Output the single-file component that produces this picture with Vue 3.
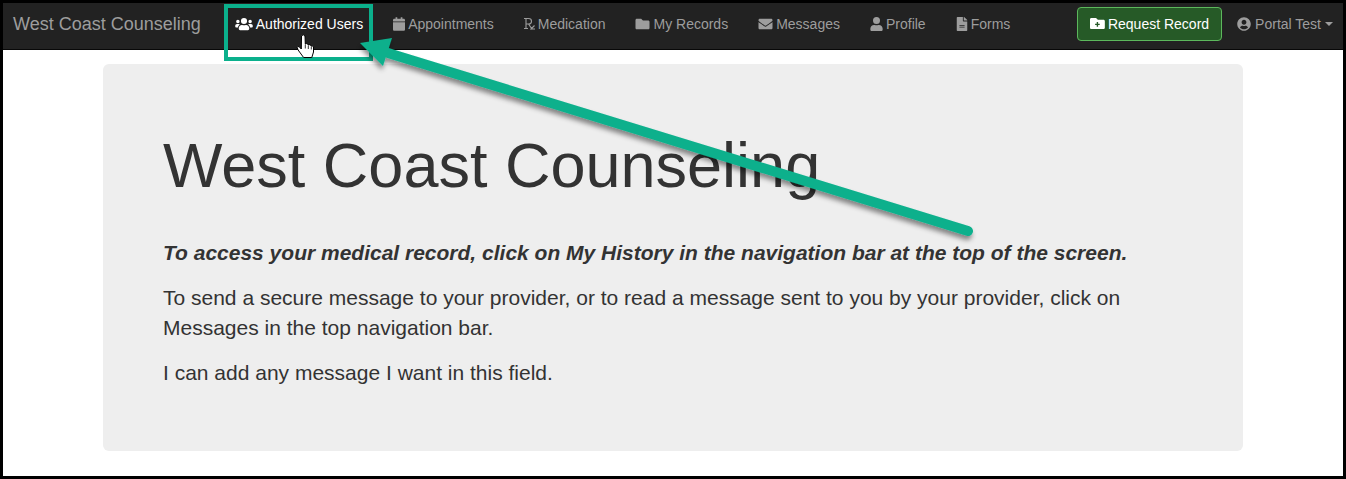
<script setup>
const links = [
  { label: 'Authorized Users', icon: 'users', w: 18, active: true },
  { label: 'Appointments', icon: 'calendar', w: 12 },
  { label: 'Medication', icon: 'rx', w: 11 },
  { label: 'My Records', icon: 'folder', w: 15 },
  { label: 'Messages', icon: 'envelope', w: 15 },
  { label: 'Profile', icon: 'user', w: 13 },
  { label: 'Forms', icon: 'file', w: 12 },
];

const paths = {
  users: 'M96 224a64 64 0 1 0 0-128 64 64 0 0 0 0 128zm448 0a64 64 0 1 0 0-128 64 64 0 0 0 0 128zm32 32h-64c-17.600 0-33.500 7.100-45.100 18.600 40.300 22.100 68.900 62 75.100 109.400h66c17.700 0 32-14.300 32-32v-32c0-35.300-28.700-64-64-64zm-256 0a112 112 0 1 0 0-224 112 112 0 0 0 0 224zm76.800 32h-8.300c-20.800 10-43.900 16-68.500 16s-47.600-6-68.500-16h-8.300C179.600 288 128 339.600 128 403.200V432c0 26.500 21.500 48 48 48h288c26.500 0 48-21.500 48-48v-28.800c0-63.600-51.600-115.200-115.200-115.200zm-223.700-13.400C161.500 263.100 145.600 256 128 256H64c-35.300 0-64 28.700-64 64v32c0 17.700 14.300 32 32 32h65.900c6.300-47.400 34.900-87.300 75.200-109.400z',
  calendar: 'M12 192h424c6.600 0 12 5.400 12 12v260c0 26.500-21.500 48-48 48H48c-26.500 0-48-21.500-48-48V204c0-6.600 5.400-12 12-12zm436-44v-36c0-26.500-21.500-48-48-48h-48V12c0-6.600-5.400-12-12-12h-40c-6.600 0-12 5.400-12 12v52H160V12c0-6.600-5.400-12-12-12h-40c-6.600 0-12 5.400-12 12v52H48C21.500 64 0 85.500 0 112v36c0 6.600 5.400 12 12 12h424c6.600 0 12-5.400 12-12z',
  folder: 'M464 128H272l-64-64H48C21.490 64 0 85.490 0 112v288c0 26.510 21.490 48 48 48h416c26.510 0 48-21.490 48-48V176c0-26.510-21.490-48-48-48z',
  envelope: 'M502.300 190.800c3.900-3.100 9.700-.2 9.700 4.700V400c0 26.500-21.500 48-48 48H48c-26.500 0-48-21.500-48-48V195.600c0-5 5.700-7.800 9.700-4.700 22.400 17.400 52.100 39.500 154.100 113.600 21.100 15.400 56.700 47.800 92.200 47.600 35.700.3 72-32.800 92.300-47.600 102-74.100 131.600-96.300 154-113.700zM256 320c23.200.4 56.600-29.200 73.400-41.400 132.700-96.300 142.800-104.700 173.400-128.700 5.800-4.500 9.200-11.500 9.200-18.900v-19c0-26.500-21.500-48-48-48H48C21.500 64 0 85.500 0 112v19c0 7.400 3.400 14.300 9.200 18.900 30.600 23.900 40.700 32.400 173.400 128.700 16.800 12.200 50.200 41.800 73.400 41.400z',
  user: 'M224 256a128 128 0 1 0 0-256 128 128 0 0 0 0 256zm89.600 32h-16.700c-22.200 10.200-46.900 16-72.900 16s-50.600-5.800-72.900-16h-16.700C60.200 288 0 348.200 0 422.400V464c0 26.500 21.500 48 48 48h352c26.500 0 48-21.500 48-48v-41.600c0-74.200-60.200-134.400-134.400-134.400z',
  file: 'M224 136V0H24C10.700 0 0 10.700 0 24v464c0 13.300 10.700 24 24 24h336c13.300 0 24-10.700 24-24V160H248c-13.200 0-24-10.800-24-24zm64 236c0 6.600-5.400 12-12 12H108c-6.600 0-12-5.400-12-12v-8c0-6.600 5.400-12 12-12h168c6.600 0 12 5.400 12 12v8zm0-64c0 6.600-5.400 12-12 12H108c-6.600 0-12-5.400-12-12v-8c0-6.600 5.400-12 12-12h168c6.600 0 12 5.400 12 12v8zm96-186v6H256V0h6c6.400 0 12.500 2.500 17 7l97.900 98c4.500 4.500 7.100 10.600 7.100 17z',
};
const viewBoxes = { users: '0 0 640 512', calendar: '0 0 448 512', folder: '0 0 512 512', envelope: '0 0 512 512', user: '0 0 448 512', file: '0 0 384 512' };
</script>

<template>
  <div class="frame">
    <nav class="navbar">
      <a class="brand">West Coast Counseling</a>
      <ul class="nav-links">
        <li v-for="link in links" :key="link.label" class="nav-link" :class="{ active: link.active }">
          <svg v-if="link.icon === 'rx'" class="icon" :style="{ width: link.w + 'px' }" viewBox="0 0 11 14" fill="none" stroke="currentColor" stroke-width="1.100">
            <path d="M0 1.500h4.500c2 0 3 1 3 2.700s-1.200 2.800-3 2.800H2M2 1.500V11.500M0 11.500h4M4.500 7l3.500 5h3M6.500 12.500l4-4" />
          </svg>
          <svg v-else class="icon" :style="{ width: link.w + 'px' }" :viewBox="viewBoxes[link.icon]" fill="currentColor">
            <path :d="paths[link.icon]" />
          </svg>
          {{ link.label }}
        </li>
      </ul>
      <div class="nav-right">
        <button class="btn-request">
          <svg class="folder-plus" viewBox="0 0 512 512">
            <path fill="#fff" d="M464 128H272l-64-64H48C21.490 64 0 85.490 0 112v288c0 26.510 21.490 48 48 48h416c26.510 0 48-21.490 48-48V176c0-26.510-21.490-48-48-48z" />
            <path fill="#265a27" d="M232 208h48v56h56v48h-56v56h-48v-56h-56v-48h56z" />
          </svg>
          Request Record
        </button>
        <a class="user-menu">
          <svg class="icon user-circle" viewBox="0 0 496 512" fill="currentColor">
            <path d="M248 8C111 8 0 119 0 256s111 248 248 248 248-111 248-248S385 8 248 8zm0 96c48.600 0 88 39.400 88 88s-39.400 88-88 88-88-39.400-88-88 39.400-88 88-88zm0 344c-58.700 0-111.300-26.600-146.500-68.200 18.800-35.400 55.600-59.800 98.500-59.800 2.400 0 4.800.4 7.100 1.100 13 4.200 26.600 6.900 40.900 6.900 14.300 0 28-2.700 40.900-6.900 2.300-.7 4.700-1.100 7.100-1.100 42.900 0 79.700 24.400 98.500 59.800C359.300 421.400 306.700 448 248 448z" />
          </svg>
          Portal Test
          <span class="caret"></span>
        </a>
      </div>
    </nav>

    <main class="page">
      <section class="jumbotron">
        <h1>West Coast Counseling</h1>
        <p class="lead"><strong><em>To access your medical record, click on My History in the navigation bar at the top of the screen.</em></strong></p>
        <p>To send a secure message to your provider, or to read a message sent to you by your provider, click on Messages in the top navigation bar.</p>
        <p>I can add any message I want in this field.</p>
      </section>
    </main>

    <!-- annotation drawn over the screenshot -->
    <svg class="annotation" width="1346" height="479" viewBox="0 0 1346 479">
      <defs>
        <filter id="arrow-shadow" x="-5%" y="-20%" width="110%" height="140%">
          <feDropShadow dx="-1" dy="4" stdDeviation="2.500" flood-color="#000" flood-opacity="0.45" />
        </filter>
      </defs>
      <rect x="226" y="6" width="145" height="53" fill="none" stroke="#0bb08c" stroke-width="4" />
      <g filter="url(#arrow-shadow)">
        <path d="M968 231 L388 53" stroke="#0bb08c" stroke-width="10" stroke-linecap="round" fill="none" />
        <path d="M360 43 L392 38 L383 66 Z" fill="#0bb08c" />
      </g>
      <!-- hand cursor -->
      <path d="M301.500 36q1.700-2.500 3.500 0l.3 8q1.500-1 2.700 .2l.3 .8q1.500-.8 2.500 .3l.2 .7q1.800-.6 2.500 1v5l-1.700 5.500h-8.200l-5.500-7.500-.9-2.500q.5-1.500 2-.7l2.100 2.200z" fill="#fff" stroke="#000" stroke-width="1" stroke-linejoin="round" />
      <path d="M305.300 44.500v4M308.300 45.500v3.500M311.300 46.500v3" fill="none" stroke="#000" stroke-width="0.800" />
    </svg>
  </div>
</template>

<style>
html, body {
  margin: 0;
  background: #000;
}
</style>

<style scoped>
.frame {
  position: relative;
  box-sizing: border-box;
  width: 1346px;
  height: 479px;
  padding: 3px;
  overflow: hidden;
  background: #000;
  font-family: "Liberation Sans", Arial, sans-serif;
  color: #333;
}

.navbar {
  display: flex;
  align-items: center;
  box-sizing: border-box;
  height: 47px;
  padding-bottom: 5px;
  background: #222;
  border-bottom: 1px solid #080808;
  color: #9d9d9d;
  font-size: 14px;
}

.brand {
  padding: 2px 19px 0 10px;
  font-size: 18px;
}

.nav-links {
  display: flex;
  margin: 0;
  padding: 0;
  list-style: none;
}

.nav-link {
  display: flex;
  align-items: center;
  gap: 3px;
  padding: 0 15px;
}

.nav-link.active {
  color: #fff;
}

.icon {
  display: block;
  height: 14px;
}

.nav-right {
  display: flex;
  align-items: center;
  margin-left: auto;
  padding-right: 10px;
}

.btn-request {
  display: flex;
  align-items: center;
  gap: 3px;
  box-sizing: border-box;
  width: 145px;
  height: 34px;
  padding: 0 12px;
  border: 1px solid #5cb85c;
  border-radius: 4px;
  background: #265a27;
  color: #fff;
  font: 14px "Liberation Sans", Arial, sans-serif;
  white-space: nowrap;
}

.folder-plus {
  display: block;
  width: 15px;
  height: 15px;
}

.user-menu {
  display: flex;
  align-items: center;
  gap: 4px;
  margin-left: 15px;
}

.user-circle {
  width: 14px;
}

.caret {
  width: 0;
  height: 0;
  border-top: 4px solid currentColor;
  border-left: 4px solid transparent;
  border-right: 4px solid transparent;
}

.page {
  height: 426px;
  padding: 14px 100px 0;
  box-sizing: border-box;
  background: #fff;
}

.jumbotron {
  box-sizing: border-box;
  height: 387px;
  padding: 60px;
  border-radius: 6px;
  background: #eee;
}

h1 {
  margin: 7px 0 38px;
  font-size: 63px;
  font-weight: 400;
  line-height: 69px;
}

p {
  margin: 0 0 15px;
  font-size: 21px;
  line-height: 30px;
}

.annotation {
  position: absolute;
  top: 0;
  left: 0;
  pointer-events: none;
}
</style>
